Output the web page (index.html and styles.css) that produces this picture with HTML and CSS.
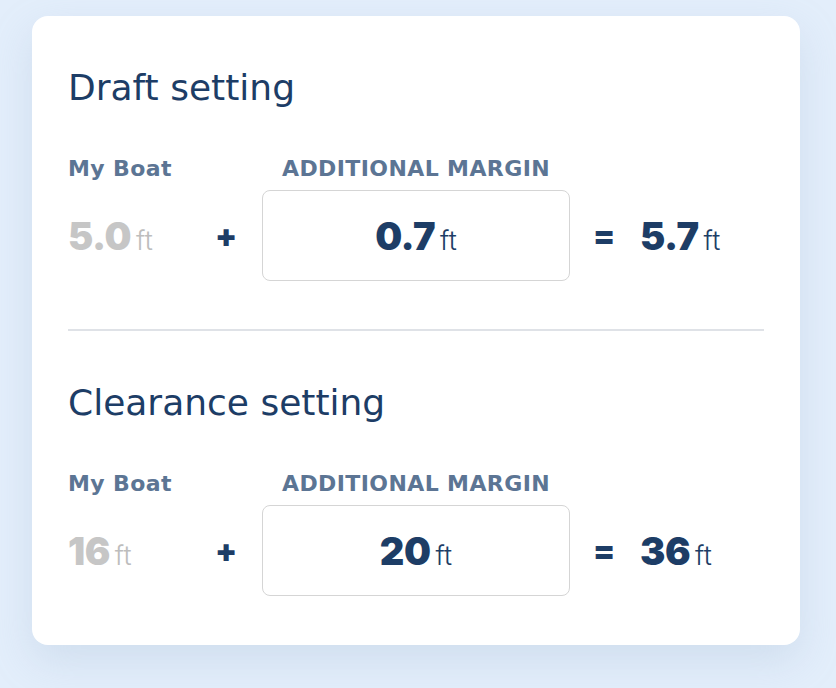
FILE: index.html
```html
<!DOCTYPE html>
<html lang="en">
<head>
<meta charset="utf-8">
<link rel="stylesheet" href="styles.css">
</head>
<body>
<div class="card">
  <section class="setting">
    <h2 class="title">Draft setting</h2>
    <div class="calc">
      <div class="label boat-label">My Boat</div>
      <div class="label margin-label">ADDITIONAL MARGIN</div>
      <div class="value muted"><span class="num">5.0</span><span class="unit">ft</span></div>
      <div class="op">+</div>
      <div class="box"><div class="value"><span class="num">0.7</span><span class="unit">ft</span></div></div>
      <div class="op">=</div>
      <div class="value"><span class="num">5.7</span><span class="unit">ft</span></div>
    </div>
  </section>
  <section class="setting">
    <h2 class="title">Clearance setting</h2>
    <div class="calc">
      <div class="label boat-label">My Boat</div>
      <div class="label margin-label">ADDITIONAL MARGIN</div>
      <div class="value muted"><span class="num">16</span><span class="unit">ft</span></div>
      <div class="op">+</div>
      <div class="box"><div class="value"><span class="num">20</span><span class="unit">ft</span></div></div>
      <div class="op">=</div>
      <div class="value"><span class="num">36</span><span class="unit">ft</span></div>
    </div>
  </section>
</div>
</body>
</html>
```
FILE: styles.css
```css
* { box-sizing: border-box; }
html, body { margin: 0; padding: 0; }
body {
  width: 836px;
  height: 688px;
  background: #e3eefb;
  font-family: "Inter", "Liberation Sans", sans-serif;
  color: #1d3d66;
  padding: 16px 36px 0 32px;
  overflow: hidden;
}
.card {
  width: 768px;
  height: 629px;
  background: #ffffff;
  border-radius: 16px;
  padding: 0 36px;
  box-shadow: 0 16px 40px rgba(150, 175, 205, 0.25);
}
.setting {
  padding: 52px 0 48px;
}
.setting + .setting {
  border-top: 2px solid #dfe2e7;
}
.title {
  margin: 0;
  font-family: "DejaVu Sans", sans-serif;
  font-size: 36px;
  line-height: 40px;
  font-weight: 400;
  color: #1d3d66;
}
.calc {
  margin-top: 47px;
  display: grid;
  grid-template-columns: 124px 18px 308px 18px auto;
  grid-template-rows: auto 91px;
  column-gap: 26px;
  row-gap: 7px;
  align-items: center;
}
.label {
  grid-row: 1;
  font-family: "DejaVu Sans", sans-serif;
  font-size: 22px;
  font-weight: 700;
  line-height: 28px;
  letter-spacing: 0.4px;
  color: #5c7594;
  white-space: nowrap;
}
.boat-label { grid-column: 1 / 3; }
.margin-label { grid-column: 3; text-align: center; }
.calc > .value, .calc > .op, .calc > .box { grid-row: 2; }
.value {
  display: flex;
  align-items: baseline;
  gap: 5px;
}
.box {
  height: 91px;
  display: flex;
  justify-content: center;
  align-items: center;
  border: 1px solid #d5d5d5;
  border-radius: 8px;
}
.num {
  font-size: 38px;
  font-weight: 900;
  letter-spacing: -0.5px;
  color: #1d3d66;
}
.unit {
  font-size: 27px;
  font-weight: 300;
  color: #1d3d66;
}
.muted .num { color: #c6c6c6; }
.muted .unit { color: #bdbdbd; }
.op {
  font-size: 32px;
  font-weight: 900;
  text-align: center;
  margin-left: -3px;
  color: #1d3d66;
}
```
